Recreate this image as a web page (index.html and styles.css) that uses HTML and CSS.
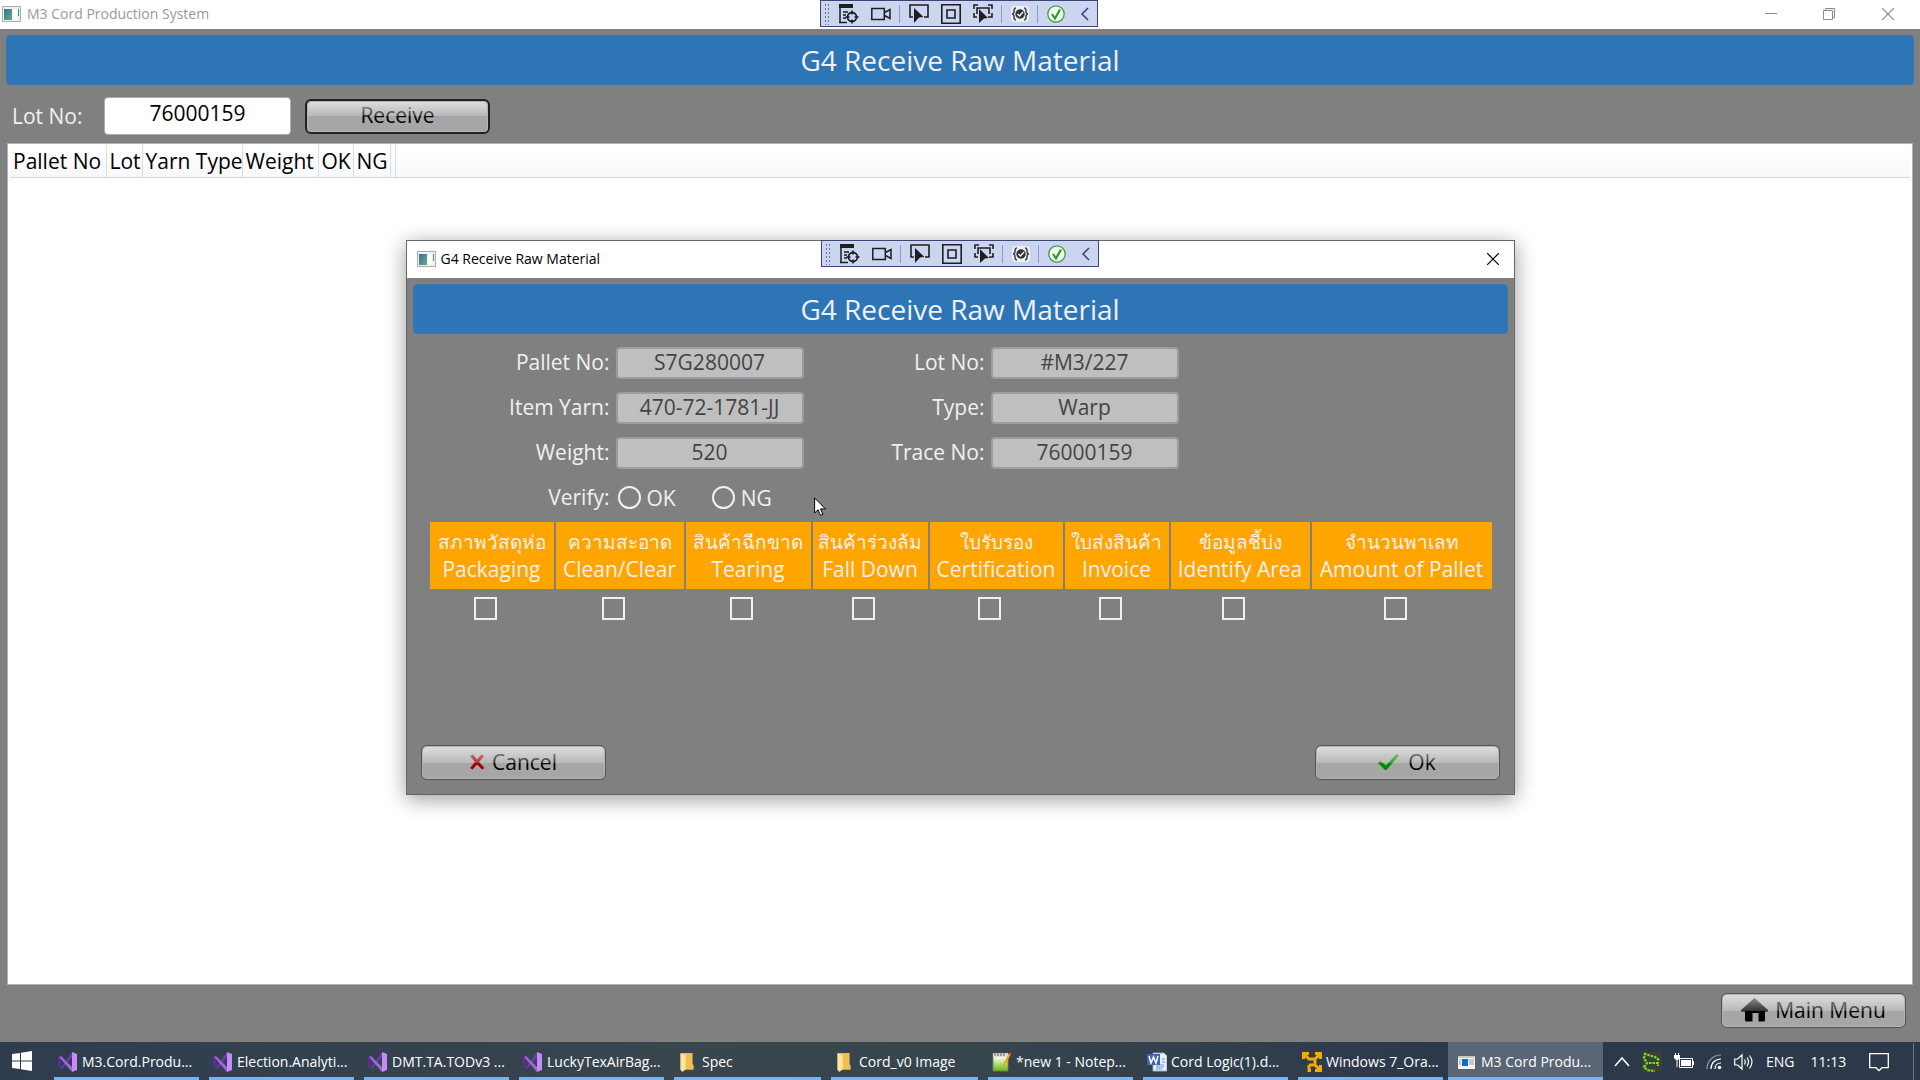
FILE: index.html
```html
<!DOCTYPE html>
<html lang="en">
<head>
<meta charset="utf-8">
<title>M3 Cord Production System</title>
<link rel="stylesheet" href="styles.css">
</head>
<body>
<svg class="sprite" aria-hidden="true">
  <defs>
    <linearGradient id="app-fill" x1="0" y1="0" x2="1" y2="1"><stop offset="0" stop-color="#3d6fa0"/><stop offset="1" stop-color="#5fae7c"/></linearGradient>
    <linearGradient id="note-fill" x1="0" y1="0" x2="0" y2="1"><stop offset="0.2" stop-color="#f4fbe0"/><stop offset="1" stop-color="#5cc400"/></linearGradient>
  </defs>
  <symbol id="i-app" viewBox="0 0 19 16"><rect x="0.5" y="0.5" width="18" height="15" fill="#eef1f3" stroke="#a7adb2"/><rect x="2" y="3" width="8" height="11" fill="url(#app-fill)"/><rect x="11" y="3" width="4" height="11" fill="#fff"/><rect x="16" y="3" width="1" height="7" fill="#3f8f9c"/></symbol>
  <symbol id="i-tree" viewBox="0 0 20 20"><path d="M0 0h14v4H0z" fill="#1e1e1e"/><path d="M1 4v15M0 18.5h8M4 8h5M4 11h3M4 14h3" stroke="#1e1e1e" stroke-width="1.5" fill="none"/><circle cx="13" cy="13" r="4.5" fill="none" stroke="#1e1e1e" stroke-width="1.8"/><path d="M13 6.500v4M13 15.500v4M6.500 13h4M15.500 13h4" stroke="#1e1e1e" stroke-width="1.6"/></symbol>
  <symbol id="i-cam" viewBox="0 0 20 20"><path d="M.8 4.500h12.500v11H.8zM13.500 8.500l5.500-3v9l-5.500-3" fill="none" stroke="#1e1e1e" stroke-width="1.500"/></symbol>
  <symbol id="i-pick" viewBox="0 0 20 20"><path d="M4 13H1V1h18v12h-4" fill="none" stroke="#1e1e1e" stroke-width="1.600"/><path d="M5 4l9.500 9-4.500.5L5 19z" fill="#1e1e1e"/></symbol>
  <symbol id="i-box" viewBox="0 0 20 20"><path d="M.8.8h18.400v18.400H.8zM6 6h8v8H6z" fill="none" stroke="#1e1e1e" stroke-width="1.600"/></symbol>
  <symbol id="i-track" viewBox="0 0 20 20"><path d="M1 5V1h4M15 1h4v4M1 9v4h3M19 9v4h-4M4 10V4h12v6" fill="none" stroke="#1e1e1e" stroke-width="1.600"/><path d="M6 5l9 9-4 .5L6 19z" fill="#1e1e1e"/></symbol>
  <symbol id="i-brace" viewBox="0 0 18 20"><rect width="18" height="16" y="2" rx="4" fill="#eceef8"/><path d="M5 4Q3 4 3 7T1 10q2 0 2 3t2 3M13 4q2 0 2 3t2 3q-2 0-2 3t-2 3" fill="none" stroke="#444" stroke-width="1.500"/><circle cx="9" cy="10" r="4.700" fill="#333"/><path d="M6.500 10l2 2 3.500-4" stroke="#fff" stroke-width="1.300" fill="none"/></symbol>
  <symbol id="i-okc" viewBox="0 0 18 20"><circle cx="9" cy="10" r="8.200" fill="#f3f8f3" stroke="#38a138" stroke-width="1.300"/><path d="M5 10l3 4.500L13 5.500" stroke="#2b9a2b" stroke-width="2.200" fill="none"/></symbol>
  <symbol id="i-left" viewBox="0 0 12 20"><path d="M10 4L4 10l6 6" stroke="#33407a" stroke-width="1.500" fill="none"/></symbol>
  <symbol id="i-close" viewBox="0 0 12 12"><path d="M0 0l12 12M12 0L0 12" stroke="currentColor" stroke-width="1.200" fill="none"/></symbol>
  <symbol id="i-vs" viewBox="0 0 20 20"><path d="M0 5l3-1v12l-3-1z" fill="#5a2d91"/><path d="M3 16L14 0v5L4 17z" fill="#6f3bab"/><path d="M3 4l11 11v5L1 5z" fill="#9a66d8"/><path d="M14 0l5 2v16l-5 2z" fill="#c58cf5"/></symbol>
  <symbol id="i-folder" viewBox="0 0 12 18"><path d="M1 1h10v10l1 1v4H3z" fill="#f0bf52"/><path d="M0 1l5 2v12l-3 3-2-2z" fill="#ffe49a"/></symbol>
</svg>

<header class="titlebar">
  <svg class="app-icon"><use href="#i-app"/></svg>
  <span class="titlebar-text">M3 Cord Production System</span>
  <div class="window-controls">
    <button aria-label="Minimize"><svg width="12" height="12" viewBox="0 0 12 12"><path d="M0 5.500h12" stroke="currentColor"/></svg></button>
    <button aria-label="Restore"><svg width="12" height="12" viewBox="0 0 12 12"><path d="M.5 2.500h9v9h-9zM2.500 2V.5h9v9H10" fill="none" stroke="currentColor"/></svg></button>
    <button aria-label="Close"><svg width="12" height="12"><use href="#i-close"/></svg></button>
  </div>
  <div class="debug-bar">
    <span class="grip"></span>
    <button aria-label="Live visual tree"><svg><use href="#i-tree"/></svg></button>
    <button aria-label="Record"><svg><use href="#i-cam"/></svg></button>
    <i class="sep"></i>
    <button aria-label="Select element"><svg><use href="#i-pick"/></svg></button>
    <button aria-label="Layout adorners"><svg><use href="#i-box"/></svg></button>
    <button aria-label="Track focus"><svg><use href="#i-track"/></svg></button>
    <i class="sep"></i>
    <button class="small" aria-label="Binding failures"><svg><use href="#i-brace"/></svg></button>
    <i class="sep"></i>
    <button class="small" aria-label="Hot reload"><svg><use href="#i-okc"/></svg></button>
    <button class="thin" aria-label="Collapse"><svg><use href="#i-left"/></svg></button>
  </div>
</header>

<main class="page">
  <h1 class="banner">G4 Receive Raw Material</h1>
  <form class="lot-row">
    <label for="lot">Lot No:</label>
    <input class="lot-input" id="lot" type="text" value="76000159">
    <button type="button" class="btn btn-default">Receive</button>
  </form>
  <section class="list">
    <table class="list-table">
      <thead><tr><th class="c-pallet">Pallet No</th><th class="c-lot">Lot</th><th class="c-yarn">Yarn Type</th><th class="c-weight">Weight</th><th class="c-ok">OK</th><th class="c-ng">NG</th><th class="c-end"></th><th></th></tr></thead>
    </table>
  </section>
  <footer class="page-footer">
    <button class="btn"><svg width="27" height="24" viewBox="0 0 27 24"><path d="M13.500 0L27 12v1.500h-3V22q0 1.500-1.500 1.500h-5V15h-6v8.500h-6Q4 23.500 4 22v-8.500H0V12z" fill="#000"/></svg><span>Main Menu</span></button>
  </footer>
</main>

<nav class="taskbar">
  <button class="start" aria-label="Start"><svg width="20" height="20" viewBox="0 0 20 20"><path d="M0 3l8-1v7.500H0zM9 1.800L20 0v9.500H9zM0 10.500h8V18l-8-1zM9 10.500h11V20L9 18.200z" fill="#fff"/></svg></button>
  <div class="tasks">
    <button class="task"><svg class="ic"><use href="#i-vs"/></svg><span>M3.Cord.Produ...</span></button>
    <button class="task"><svg class="ic"><use href="#i-vs"/></svg><span>Election.Analyti...</span></button>
    <button class="task"><svg class="ic"><use href="#i-vs"/></svg><span>DMT.TA.TODv3 ...</span></button>
    <button class="task"><svg class="ic"><use href="#i-vs"/></svg><span>LuckyTexAirBag...</span></button>
    <button class="task folder"><svg class="ic"><use href="#i-folder"/></svg><span>Spec</span></button>
    <button class="task folder"><svg class="ic"><use href="#i-folder"/></svg><span>Cord_v0 Image</span></button>
    <button class="task"><svg class="ic" viewBox="0 0 20 20"><path d="M1 2h15v17H1z" fill="url(#note-fill)" stroke="#777"/><path d="M1 1h15v4H1z" fill="#ddd"/><path d="M3 0v4M6 0v4M9 0v4M12 0v4" stroke="#555"/><path d="M19 2l-7 13-2 2 .5-3.500L17 1z" fill="#f2a31b"/><path d="M17 1l1-1 2 1-1 2z" fill="#c22"/></svg><span>*new 1 - Notep...</span></button>
    <button class="task"><svg class="ic" viewBox="0 0 20 20"><path d="M6 1h11l3 3v15H6z" fill="#e9f1fc" stroke="#8fa9d6"/><path d="M9 13h8M9 15h8M9 17h6M15 7h3M15 10h3" stroke="#6f92cf"/><rect y="2" width="13" height="11" fill="#3c66b4"/><path d="M2 4l2 7 2.500-6L9 11l2-7" stroke="#fff" stroke-width="1.500" fill="none"/></svg><span>Cord Logic(1).d...</span></button>
    <button class="task"><svg class="ic" viewBox="0 0 20 20"><path d="M1.500 7V1.500H7M2 2l5 5h6M13 1.500h5.500V7M18 2l-5 5v7M7 13h6M7 17v-4M13 13l5 5M13 18.500h5.500V13M9 18.500H5.500" fill="none" stroke="#f0ad00" stroke-width="3"/></svg><span>Windows 7_Ora...</span></button>
    <button class="task active"><svg class="ic" viewBox="0 0 20 20"><rect x="1" y="4" width="17" height="13" fill="#f4f4f4"/><path d="M1 4h17v2H1z" fill="#c9c9c9"/><rect x="5" y="7" width="6" height="7" fill="#0a6cd6"/><path d="M2 8h2M2 10h2M2 12h2M12 8h5M12 10h5M12 12h5" stroke="#999"/></svg><span>M3 Cord Produ...</span></button>
  </div>
  <div class="tray">
    <svg width="16" height="20" viewBox="0 0 16 20"><path d="M1 14l7-8 7 8" fill="none" stroke="#fff" stroke-width="1.500"/></svg>
    <svg width="20" height="20" viewBox="0 0 20 20"><rect width="20" height="20" fill="#3a4038"/><path d="M17 8L13 5 3 2 2 6l3 5-3 4 3 3 8 1M7 11h9v3" fill="none" stroke="#7be01a" stroke-width="2.200" stroke-dasharray="2.500 1"/></svg>
    <svg width="20" height="20" viewBox="0 0 20 20"><path d="M5.500 6.500h13v9h-13z" fill="none" stroke="#fff"/><path d="M7 8h10v6H7zM19 9h1v4h-1zM0 3h6v3L4 8H2L0 6zM1 1h1v2H1zM4 1h1v2H4zM2.500 8h1v7h-1z" fill="#fff"/></svg>
    <svg width="16" height="20" viewBox="0 0 16 20"><g fill="none" stroke="#fff" stroke-width="1.200"><path d="M1 17C1 9 7 3 15 3" stroke="#8d96a2"/><path d="M5 17C5 11 9 7 15 7M9 17c0-4 2-6 6-6"/></g><circle cx="13.500" cy="15.500" r="1.800" fill="#fff"/></svg>
    <svg width="20" height="20" viewBox="0 0 20 20"><path d="M.7 7h3L8 3v14l-4.300-4h-3zM10.500 7.500q1.500 2.500 0 5M13 5.500q3 4.500 0 9M15.500 3.500q5 6.500 0 13" fill="none" stroke="#fff" stroke-width="1.200"/></svg>
    <span class="lang">ENG</span>
    <time>11:13</time>
    <svg class="notify" width="20" height="20" viewBox="0 0 20 20"><path d="M.7 1.700h18.600v14H13l-3 3-3-3H.7z" fill="none" stroke="#fff" stroke-width="1.300"/></svg>
  </div>
</nav>

<div class="overlay">
  <div class="dialog" role="dialog" aria-label="G4 Receive Raw Material">
    <div class="dialog-title">
      <svg class="app-icon"><use href="#i-app"/></svg>
      <span>G4 Receive Raw Material</span>
      <button class="dialog-close" aria-label="Close"><svg width="12" height="12"><use href="#i-close"/></svg></button>
      <div class="debug-bar">
        <span class="grip"></span>
        <button aria-label="Live visual tree"><svg><use href="#i-tree"/></svg></button>
        <button aria-label="Record"><svg><use href="#i-cam"/></svg></button>
        <i class="sep"></i>
        <button aria-label="Select element"><svg><use href="#i-pick"/></svg></button>
        <button aria-label="Layout adorners"><svg><use href="#i-box"/></svg></button>
        <button aria-label="Track focus"><svg><use href="#i-track"/></svg></button>
        <i class="sep"></i>
        <button class="small" aria-label="Binding failures"><svg><use href="#i-brace"/></svg></button>
        <i class="sep"></i>
        <button class="small" aria-label="Hot reload"><svg><use href="#i-okc"/></svg></button>
        <button class="thin" aria-label="Collapse"><svg><use href="#i-left"/></svg></button>
      </div>
    </div>
    <div class="dialog-body">
      <h2 class="banner">G4 Receive Raw Material</h2>
      <div class="fields">
        <label for="f-pallet">Pallet No:</label><input id="f-pallet" type="text" value="S7G280007" disabled>
        <label for="f-lot">Lot No:</label><input id="f-lot" type="text" value="#M3/227" disabled>
        <label for="f-yarn">Item Yarn:</label><input id="f-yarn" type="text" value="470-72-1781-JJ" disabled>
        <label for="f-type">Type:</label><input id="f-type" type="text" value="Warp" disabled>
        <label for="f-weight">Weight:</label><input id="f-weight" type="text" value="520" disabled>
        <label for="f-trace">Trace No:</label><input id="f-trace" type="text" value="76000159" disabled>
        <span class="verify-label">Verify:</span>
        <div class="verify">
          <label><input type="radio" name="verify">OK</label>
          <label><input type="radio" name="verify">NG</label>
        </div>
      </div>
      <table class="checks">
        <colgroup><col class="w-pack"><col class="w-clean"><col class="w-tear"><col class="w-fall"><col class="w-cert"><col class="w-inv"><col class="w-area"><col class="w-amount"></colgroup>
        <thead><tr>
          <th id="h1"><span lang="th">สภาพวัสดุห่อ</span>Packaging</th>
          <th id="h2"><span lang="th">ความสะอาด</span>Clean/Clear</th>
          <th id="h3"><span lang="th">สินค้าฉีกขาด</span>Tearing</th>
          <th id="h4"><span lang="th">สินค้าร่วงล้ม</span>Fall Down</th>
          <th id="h5"><span lang="th">ใบรับรอง</span>Certification</th>
          <th id="h6"><span lang="th">ใบส่งสินค้า</span>Invoice</th>
          <th id="h7"><span lang="th">ข้อมูลชี้บ่ง</span>Identify Area</th>
          <th id="h8"><span lang="th">จำนวนพาเลท</span>Amount of Pallet</th>
        </tr></thead>
        <tbody><tr>
          <td><input type="checkbox" aria-labelledby="h1"></td>
          <td><input type="checkbox" aria-labelledby="h2"></td>
          <td><input type="checkbox" aria-labelledby="h3"></td>
          <td><input type="checkbox" aria-labelledby="h4"></td>
          <td><input type="checkbox" aria-labelledby="h5"></td>
          <td><input type="checkbox" aria-labelledby="h6"></td>
          <td><input type="checkbox" aria-labelledby="h7"></td>
          <td><input type="checkbox" aria-labelledby="h8"></td>
        </tr></tbody>
      </table>
      <div class="actions">
        <button class="btn"><svg width="16" height="16" viewBox="0 0 16 16"><path d="M1 2l3-1.500 4 5 4.500-5L15 2l-5 6 5.500 6-2.500 1.500-5-5-4.500 5L1 14l5-6z" fill="#a00000"/></svg><span>Cancel</span></button>
        <button class="btn btn-ok"><svg width="21" height="16" viewBox="0 0 21 16"><path d="M0 9l2.500-2L8 11.500 18.500 0 21 1.500 8.500 16H7z" fill="#008a00"/></svg><span>Ok</span></button>
      </div>
    </div>
  </div>
</div>
<svg class="cursor" width="13" height="20" viewBox="0 0 13 20"><path d="M.6 1v15l3.500-3.300 2.400 5.700 2.400-1-2.400-5.500h5z" fill="#fff" stroke="#000"/></svg>
</body>
</html>
```
FILE: styles.css
```css
* { box-sizing: border-box; }

body {
  margin: 0;
  height: 100vh;
  display: flex;
  flex-direction: column;
  background: #808080;
  font-family: "Open Sans", "Noto Sans", sans-serif;
  font-size: 21px;
  line-height: 28px;
  color: #f0f0f0;
  overflow: hidden;
}

button, input { font: inherit; color: inherit; }
button { border: 0; padding: 0; background: none; }
svg { display: block; flex: none; }
.sprite { position: absolute; width: 0; height: 0; }

/* Window title bar */
.titlebar {
  position: relative;
  height: 29px;
  flex: none;
  display: flex;
  align-items: center;
  padding: 0 0 1px 2px;
  background: #fff;
  color: #999;
  font-size: 14px;
}
.app-icon { width: 19px; height: 16px; }
.titlebar-text { margin-left: 6px; }
.window-controls { margin-left: auto; display: flex; color: #888; }
.window-controls button { width: 58px; height: 28px; display: grid; place-items: center; }
.window-controls button:last-child { width: 62px; padding-right: 2px; }

/* Debug toolbar floating over both windows */
.debug-bar {
  position: absolute;
  top: 0;
  left: 50%;
  margin-left: -140px;
  width: 278px;
  height: 27px;
  padding-left: 3px;
  display: flex;
  align-items: center;
  background: #ccd5f0;
  border: 1px solid #3b4578;
}
.debug-bar button { margin: 0 6px; }
.debug-bar svg { width: 20px; height: 20px; }
.debug-bar .small svg { width: 18px; }
.debug-bar .thin { margin-left: 7px; }
.debug-bar .thin svg { width: 12px; }
.debug-bar .sep { width: 1px; height: 18px; margin: 0 3px 0 2px; background: #8c9cc8; }
.grip {
  width: 7px;
  height: 22px;
  margin-right: 2px;
  background-image: radial-gradient(circle, #6d7699 1px, transparent 1px);
  background-size: 3px 4px;
}

/* Main page */
.page { flex: 1; min-height: 0; display: flex; flex-direction: column; padding: 6px 6px 0; }
.banner {
  margin: 0;
  height: 50px;
  flex: none;
  border-radius: 4px;
  background: #2e75b6;
  border: 1px solid #3b78af;
  font-size: 28px;
  font-weight: 400;
  line-height: 48px;
  text-align: center;
}
.lot-row { display: flex; align-items: center; padding: 12px 6px 8px; }
.lot-row label { width: 92px; padding-bottom: 1px; }
.lot-input {
  width: 187px;
  height: 38px;
  padding: 0 0 6px;
  border: 1px solid #abadb3;
  border-radius: 4px;
  background: #fff;
  color: #000;
  text-align: center;
}
.btn {
  position: relative;
  width: 185px;
  height: 35px;
  display: flex;
  align-items: center;
  justify-content: center;
  gap: 7px;
  padding-bottom: 2px;
  border: 1px solid #555;
  border-radius: 6px;
  background: #a6a6a6;
  box-shadow: inset 0 0 0 1px #b4b4b4;
  color: #000;
}
.btn::after {
  content: "";
  position: absolute;
  inset: 1px 1px 50%;
  border-radius: 4px 4px 0 0;
  background: linear-gradient(rgba(255,255,255,.62), rgba(255,255,255,.2));
}
.btn-default { margin-left: 14px; border: 2px solid #222; }
.btn-ok { gap: 9px; }

.list {
  flex: 1;
  min-height: 0;
  margin: 0 1px;
  padding: 1px 2px;
  background: #fff;
  border: 1px solid #abb3bb;
}
.list-table { width: 100%; table-layout: fixed; border-collapse: collapse; color: #000; }
.list-table th {
  height: 32px;
  padding: 1px 0 0 3px;
  font-weight: 400;
  text-align: left;
  white-space: nowrap;
  border-right: 1px solid #dcdcdc;
  border-bottom: 1px solid #d5d5d5;
  background: linear-gradient(#fff, #f7f8fa);
}
.list-table th:last-child { border-right: 0; }
.c-pallet { width: 96px; }
.c-lot { width: 36px; }
.c-yarn { width: 100px; }
.c-weight { width: 76px; }
.c-ok { width: 35px; }
.c-ng { width: 37px; }
.c-end { width: 5px; }
.page-footer { flex: none; display: flex; justify-content: flex-end; padding: 8px 8px 14px; }

/* Dialog */
.overlay {
  position: absolute;
  inset: 0 0 45px;
  display: grid;
  place-items: center;
}
.dialog {
  width: 1109px;
  max-width: 100%;
  background: #808080;
  border: 1px solid #666;
  box-shadow: 0 4px 20px rgba(0,0,0,.4);
}
.dialog-title {
  position: relative;
  display: flex;
  align-items: center;
  height: 37px;
  padding: 0 15px 1px 10px;
  background: #fff;
  color: #000;
  font-size: 14px;
}
.dialog-title > span { margin-left: 5px; }
.dialog-title .debug-bar { top: -1px; margin-left: -139px; }
.dialog-close { margin-left: auto; }
.dialog-body { padding: 6px 6px 14px; }
.fields {
  display: grid;
  grid-template-columns: 197px 188px 175px 188px;
  column-gap: 6px;
  row-gap: 13px;
  padding: 13px 0 0;
}
.fields > label, .verify-label { text-align: right; line-height: 31px; }
.fields > input {
  width: 188px;
  height: 32px;
  padding: 0 0 2px;
  border: 2px solid #9c9ca0;
  border-radius: 4px;
  background: #bfbfbf;
  color: #444;
  text-align: center;
}
.verify { display: flex; gap: 34px; }
.verify label { display: flex; align-items: center; gap: 6px; }
.verify input {
  appearance: none;
  width: 23px;
  height: 23px;
  margin: 0 0 0 2px;
  border: 2px solid #f0f0f0;
  border-radius: 50%;
}
.checks { width: 1064px; margin: 9px 0 0 15px; table-layout: fixed; border-spacing: 2px 0; }
.checks th { height: 67px; padding: 0; background: #ffa500; font-weight: 400; line-height: 27px; white-space: nowrap; }
.checks th span { display: block; font-size: 19px; }
.checks td { height: 38px; padding: 0 13px 0 0; text-align: center; }
.checks input {
  appearance: none;
  display: block;
  width: 23px;
  height: 23px;
  margin: 0 auto;
  border: 2px solid #f0f0f0;
}
.w-pack { width: 124px; }
.w-clean { width: 128px; }
.w-tear { width: 125px; }
.w-fall { width: 115px; }
.w-cert { width: 133px; }
.w-inv { width: 104px; }
.w-area { width: 139px; }
.w-amount { width: 180px; }
.actions { display: flex; justify-content: space-between; padding: 118px 8px 0; }

/* Taskbar */
.taskbar {
  flex: none;
  display: flex;
  height: 38px;
  background: linear-gradient(90deg, #2f3c4e, #39464e 35%, #37454d 50%, #2d394b 75%);
  color: #fff;
  font-size: 14px;
}
.start { width: 43px; display: grid; place-items: center; margin-right: 6px; }
.tasks { flex: 1; display: flex; }
.task {
  flex: 1;
  min-width: 0;
  display: flex;
  align-items: center;
  gap: 4px;
  padding: 1px 0 0 9px;
  text-align: left;
  white-space: nowrap;
  background: linear-gradient(#76b4f8, #76b4f8) 5px 100% / calc(100% - 10px) 3px no-repeat;
}
.ic { width: 20px; height: 20px; }
.folder { padding-left: 11px; gap: 8px; }
.folder .ic { width: 14px; }
.active { background-color: #5a6675; background-position: 0 100%; background-size: 100% 3px; }
.tray { flex: none; width: 317px; display: flex; align-items: center; gap: 12px; padding: 1px 0 0 11px; }
.tray time { margin-left: 4px; }
.notify { margin-left: 11px; }
.tray::after { content: ""; width: 1px; height: 38px; margin-left: 12px; background: #6d7783; }

.cursor { position: absolute; left: 814px; top: 497px; }
```
